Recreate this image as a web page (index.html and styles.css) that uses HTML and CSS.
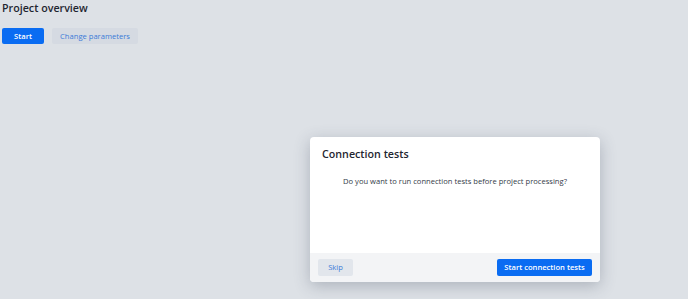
FILE: index.html
```html
<!DOCTYPE html>
<html lang="en">
<head>
  <meta charset="UTF-8">
  <meta name="viewport" content="width=device-width, initial-scale=1.0">
  <title>Project overview</title>
  <link rel="stylesheet" href="styles.css">
</head>
<body>
  <div class="page">
    <h1 class="page-title">Project overview</h1>
    <div class="actions">
      <button class="btn btn-primary">Start</button>
      <button class="btn btn-secondary">Change parameters</button>
    </div>
  </div>

  <div class="modal">
    <div class="modal-header">Connection tests</div>
    <div class="modal-body">Do you want to run connection tests before project processing?</div>
    <div class="modal-footer">
      <button class="btn btn-secondary">Skip</button>
      <button class="btn btn-primary">Start connection tests</button>
    </div>
  </div>
</body>
</html>
```

FILE: styles.css
```css
body {
  font-family: "Open Sans", "Noto Sans", sans-serif;
  background-color: #dde1e6;
  color: #1f2937;
  margin: 0;
}
.page {
  padding: 0 2px;
}
.page-title {
  font-size: 10.7px;
  font-weight: 600;
  color: #1f2630;
  margin: 0;
  padding-top: 1px;
  line-height: 14px;
}
.actions {
  display: flex;
  gap: 8px;
  margin-top: 13px;
}
.btn {
  font-family: inherit;
  font-size: 7.6px;
  height: 16px;
  padding: 0;
  border: none;
  border-radius: 2px;
  cursor: pointer;
  line-height: 16px;
  white-space: nowrap;
  text-align: center;
}
.btn-primary {
  background-color: #0a6cf2;
  color: #fff;
  font-weight: 600;
}
.btn-secondary {
  background-color: #d5dae2;
  color: #3b7ad8;
  font-weight: 400;
}
.actions .btn-primary {
  width: 42px;
}
.actions .btn-secondary {
  width: 86px;
}
.modal {
  position: absolute;
  left: 310px;
  top: 137px;
  width: 290px;
  height: 145px;
  background: #fff;
  border-radius: 4px;
  box-shadow: 0 4px 16px rgba(60, 70, 90, 0.3);
  display: flex;
  flex-direction: column;
  overflow: hidden;
}
.modal-header {
  font-size: 10.7px;
  font-weight: 600;
  color: #1f2630;
  padding: 9px 12px 0;
  line-height: 16px;
}
.modal-body {
  flex: 1;
  font-size: 7.6px;
  color: #333b47;
  text-align: center;
  padding-top: 13px;
  line-height: 12px;
}
.modal-footer {
  background: #f3f4f6;
  height: 29px;
  display: flex;
  align-items: center;
  justify-content: space-between;
  padding: 0 8px;
}
.modal-footer .btn {
  height: 17px;
  line-height: 17px;
}
.modal-footer .btn-secondary {
  width: 35px;
  background-color: #e2e6ec;
}
.modal-footer .btn-primary {
  width: 95px;
}
```
